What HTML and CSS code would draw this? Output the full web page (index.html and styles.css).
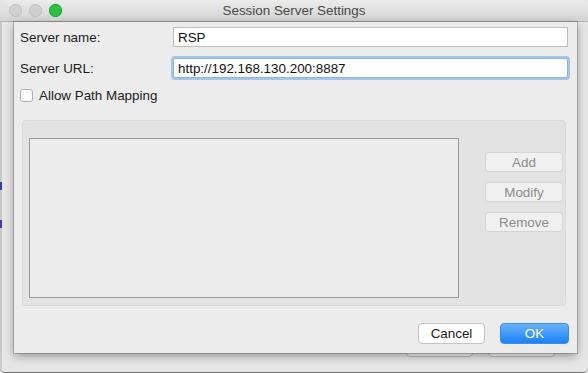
FILE: index.html
```html
<!doctype html>
<html lang="en">
<head>
    <meta charset="utf-8">
    <title>Session Server Settings</title>
    <link rel="stylesheet" href="styles.css">
</head>
<body>
<div class="window">
    <div class="titlebar">
        <div class="lights">
            <span class="light"></span>
            <span class="light"></span>
            <span class="light green"></span>
        </div>
        <div class="title">Session Server Settings</div>
    </div>

    <div class="window-body">
        <div class="side-strip">
            <span class="link-bit"></span>
            <span class="link-bit"></span>
        </div>
        <div class="window-footer">
            <span class="back-btn"></span>
            <span class="back-btn"></span>
        </div>

        <!-- the sheet sits over the window -->
        <div class="sheet">
            <div class="row">
                <label for="server_name">Server name:</label>
                <input type="text" id="server_name" class="field" value="RSP">
            </div>
            <div class="row">
                <label for="server_url">Server URL:</label>
                <input type="text" id="server_url" class="field focused" value="http://192.168.130.200:8887">
            </div>
            <label class="check-row"><span class="checkbox"></span> Allow Path Mapping</label>

            <div class="group">
                <div class="list"></div>
                <div class="side-buttons">
                    <button type="button" class="btn-disabled">Add</button>
                    <button type="button" class="btn-disabled">Modify</button>
                    <button type="button" class="btn-disabled">Remove</button>
                </div>
            </div>

            <div class="footer">
                <button type="button" class="btn-cancel">Cancel</button>
                <button type="button" class="btn-ok">OK</button>
            </div>
        </div>
    </div>
</div>
</body>
</html>
```

FILE: styles.css
```css
html, body {
    margin: 0;
    padding: 0;
}
body {
    width: 588px;
    height: 373px;
    overflow: hidden;
    background-color: #f4f4f4;
    font-family: "Liberation Sans", Arial, sans-serif;
    font-size: 13.4px;
    color: #222;
}
.window {
    height: 372px;
    background-color: #e6e6e6;
    border-bottom: 1px solid #6e6e6e;
    border-radius: 0 0 5px 5px;
    display: flex;
    flex-direction: column;
}
.titlebar {
    height: 21px;
    background: linear-gradient(#ebebeb, #d4d4d4);
    border-bottom: 1px solid #b2b2b2;
    border-radius: 5px 5px 0 0;
    display: flex;
    align-items: center;
    position: relative;
}
.lights {
    display: flex;
    gap: 7px;
    padding-left: 9px;
}
.light {
    width: 13px;
    height: 13px;
    border-radius: 50%;
    background-color: #d0d0d0;
    box-shadow: inset 0 0 0 1px #c2c2c2;
}
.light.green {
    background-color: #2ac33f;
    box-shadow: inset 0 0 0 1px #1fa733;
}
.title {
    position: absolute;
    left: 0;
    right: 0;
    text-align: center;
    color: #4a4a4a;
    font-size: 13.4px;
}
.window-body {
    flex: 1;
    position: relative;
    display: flex;
    flex-direction: column;
    justify-content: flex-end;
}
.side-strip {
    position: absolute;
    left: 0;
    top: 0;
    bottom: 0;
    width: 2px;
    background-color: #c9c9c9;
    display: flex;
    flex-direction: column;
    gap: 30px;
    padding-top: 160px;
}
.link-bit {
    width: 2px;
    height: 8px;
    background-color: #3b3bb0;
}
.window-footer {
    display: flex;
    justify-content: flex-end;
    gap: 15px;
    padding: 0 33px 15px 0;
}
.back-btn {
    width: 67px;
    height: 21px;
    box-sizing: border-box;
    background-color: #f5f5f5;
    border: 1px solid #bdbdbd;
    border-radius: 4px;
}
.sheet {
    position: absolute;
    left: 14px;
    top: 0;
    width: 563px;
    height: 331px;
    box-sizing: border-box;
    padding: 5px 9px 0 6px;
    background-color: #ececec;
    box-shadow: 0 0 0 1px rgba(0, 0, 0, 0.18), 0 3px 9px rgba(0, 0, 0, 0.35);
}
.row {
    display: grid;
    grid-template-columns: 153px 1fr;
    align-items: center;
    height: 20px;
    margin-bottom: 11px;
}
.row label {
    color: #1e1e1e;
}
.field {
    height: 20px;
    box-sizing: border-box;
    border: 1px solid #bdbdbd;
    background-color: white;
    padding: 0 4px;
    font-family: "Liberation Sans", Arial, sans-serif;
    font-size: 13.4px;
    color: #111;
    outline: none;
}
.field.focused {
    border-color: #8fb4dd;
    border-radius: 2px;
    box-shadow: 0 0 0 2px #9ec6f2;
}
.check-row {
    display: flex;
    align-items: center;
    gap: 6px;
    height: 13px;
    margin-top: 1px;
}
.checkbox {
    width: 11px;
    height: 11px;
    background-color: white;
    border: 1px solid #b1b1b1;
    border-radius: 3px;
}
.group {
    display: flex;
    margin: 18px 2px 0 2px;
    height: 186px;
    box-sizing: border-box;
    padding: 17px 2px 7px 6px;
    background-color: #e3e3e3;
    border: 1px solid #dadada;
    border-radius: 4px;
}
.list {
    flex: 1;
    border: 1px solid #9a9a9a;
    background-color: #ececec;
}
.side-buttons {
    width: 78px;
    margin-left: 26px;
    padding-top: 14px;
    display: flex;
    flex-direction: column;
    gap: 10px;
}
button {
    font-family: "Liberation Sans", Arial, sans-serif;
    font-size: 13.4px;
    height: 21px;
    padding: 0;
    border-radius: 4px;
}
.btn-disabled {
    height: 20px;
    background-color: #f0f0f0;
    border: 1px solid #d6d6d6;
    color: #8c8c8c;
}
.footer {
    display: flex;
    justify-content: flex-end;
    gap: 15px;
    margin: 17px -1px 0 0;
}
.btn-cancel {
    width: 67px;
    background-color: white;
    border: 1px solid #c4c4c4;
    color: #1a1a1a;
}
.btn-ok {
    width: 69px;
    background: linear-gradient(#69b1fa, #1a83fb);
    border: 1px solid #3d8fe6;
    color: white;
}
```
